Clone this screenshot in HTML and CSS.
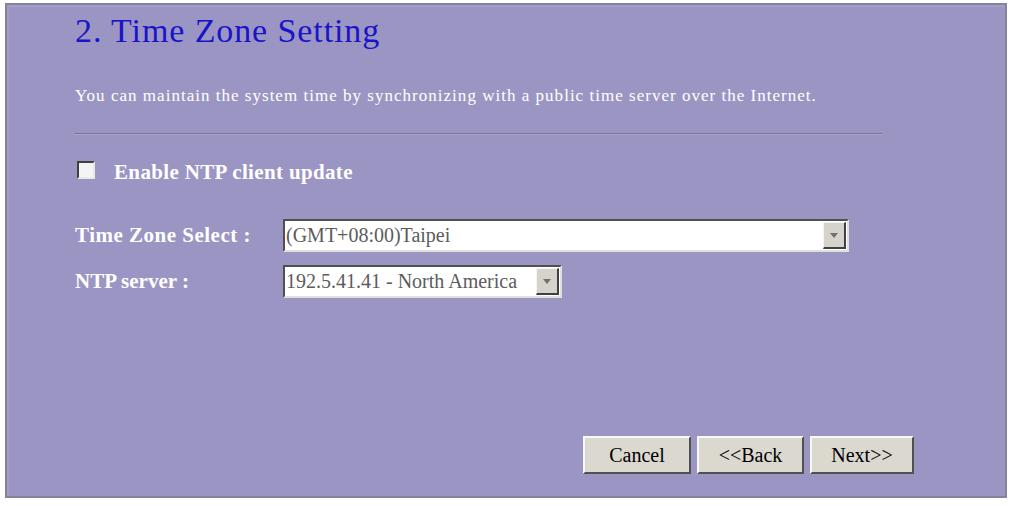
FILE: index.html
```html
<!DOCTYPE html>
<html>
<head>
<meta charset="utf-8">
<link rel="stylesheet" href="styles.css">
</head>
<body>
<div class="panel">
  <h1 class="title">2. Time Zone Setting</h1>
  <p class="desc">You can maintain the system time by synchronizing with a public time server over the Internet.</p>
  <div class="rule"></div>
  <div class="check-row">
    <span class="checkbox"></span>
    <span class="check-label">Enable NTP client update</span>
  </div>
  <div class="form">
    <div class="row">
      <span class="label label-wide">Time Zone Select :</span>
      <div class="select select-wide">
        <span class="select-text">(GMT+08:00)Taipei</span>
        <span class="arrow"><span class="tri"></span></span>
      </div>
    </div>
    <div class="row">
      <span class="label">NTP server :</span>
      <div class="select select-narrow">
        <span class="select-text">192.5.41.41 - North America</span>
        <span class="arrow"><span class="tri"></span></span>
      </div>
    </div>
  </div>
  <div class="buttons">
    <button class="btn btn-cancel">Cancel</button>
    <button class="btn btn-back">&lt;&lt;Back</button>
    <button class="btn btn-next">Next&gt;&gt;</button>
  </div>
</div>
</body>
</html>
```
FILE: styles.css
```css
html, body {
  margin: 0;
  padding: 0;
  background: #ffffff;
}
body {
  font-family: "Liberation Serif", "Times New Roman", serif;
  padding: 3px 0 0 5px;
}
.panel {
  box-sizing: border-box;
  width: 1002px;
  height: 495px;
  background: #9b95c3;
  border: 2px solid #85829a;
  box-shadow: inset 2px 2px 0 #a39ec9;
  padding: 0 0 0 68px;
  display: flex;
  flex-direction: column;
}
.title {
  margin: 6px 0 0 0;
  font-weight: normal;
  font-size: 34px;
  line-height: 40px;
  letter-spacing: 0.9px;
  color: #1a14c8;
}
.desc {
  margin: 35px 0 0 0;
  font-size: 17px;
  line-height: 20px;
  letter-spacing: 1.02px;
  color: #ffffff;
}
.rule {
  width: 807px;
  height: 1px;
  background: #7a7498;
  border-bottom: 1px solid #a9a4cc;
  margin-top: 27px;
}
.check-row {
  display: flex;
  align-items: flex-start;
  margin-top: 25px;
  height: 24px;
}
.checkbox {
  box-sizing: border-box;
  width: 18px;
  height: 18px;
  margin-left: 2px;
  margin-top: 1px;
  background: #f4f4f4;
  border-top: 2px solid #404040;
  border-left: 2px solid #404040;
  border-right: 2px solid #e8e8e8;
  border-bottom: 2px solid #e8e8e8;
}
.check-label {
  margin-left: 19px;
  font-weight: bold;
  font-size: 21px;
  line-height: 24px;
  letter-spacing: 0.35px;
  color: #ffffff;
}
.form {
  margin-top: 35px;
  display: flex;
  flex-direction: column;
  gap: 13px;
}
.row {
  display: flex;
  align-items: center;
}
.label {
  width: 208px;
  font-weight: bold;
  font-size: 21px;
  color: #ffffff;
  white-space: nowrap;
}
.label-wide {
  letter-spacing: 0.5px;
}
.select {
  box-sizing: border-box;
  height: 33px;
  background: #ffffff;
  border-top: 2px solid #505050;
  border-left: 2px solid #505050;
  border-right: 2px solid #e0e0e0;
  border-bottom: 2px solid #e0e0e0;
  display: flex;
  align-items: center;
  justify-content: space-between;
  padding: 0 1px 0 1px;
}
.select-wide { width: 566px; }
.select-narrow { width: 279px; }
.select-text {
  font-size: 20px;
  color: #5c5c5c;
  white-space: nowrap;
}
.arrow {
  box-sizing: border-box;
  width: 23px;
  height: 27px;
  background: #d6d3cc;
  border-top: 1px solid #f4f4f4;
  border-left: 1px solid #f4f4f4;
  border-right: 2px solid #404040;
  border-bottom: 2px solid #404040;
  display: flex;
  align-items: center;
  justify-content: center;
}
.tri {
  width: 0;
  height: 0;
  border-left: 4px solid transparent;
  border-right: 4px solid transparent;
  border-top: 5px solid #707070;
}
.buttons {
  margin-top: auto;
  margin-bottom: 22px;
  margin-left: 508px;
  display: flex;
  gap: 6px;
}
.btn {
  box-sizing: border-box;
  height: 38px;
  background: #dbd8d0;
  border-top: 2px solid #f8f8f8;
  border-left: 2px solid #f8f8f8;
  border-right: 2px solid #505050;
  border-bottom: 2px solid #505050;
  font-family: "Liberation Serif", "Times New Roman", serif;
  font-size: 20px;
  color: #000000;
  padding: 0;
}
.btn-cancel { width: 108px; }
.btn-back { width: 107px; }
.btn-next { width: 104px; }
```
